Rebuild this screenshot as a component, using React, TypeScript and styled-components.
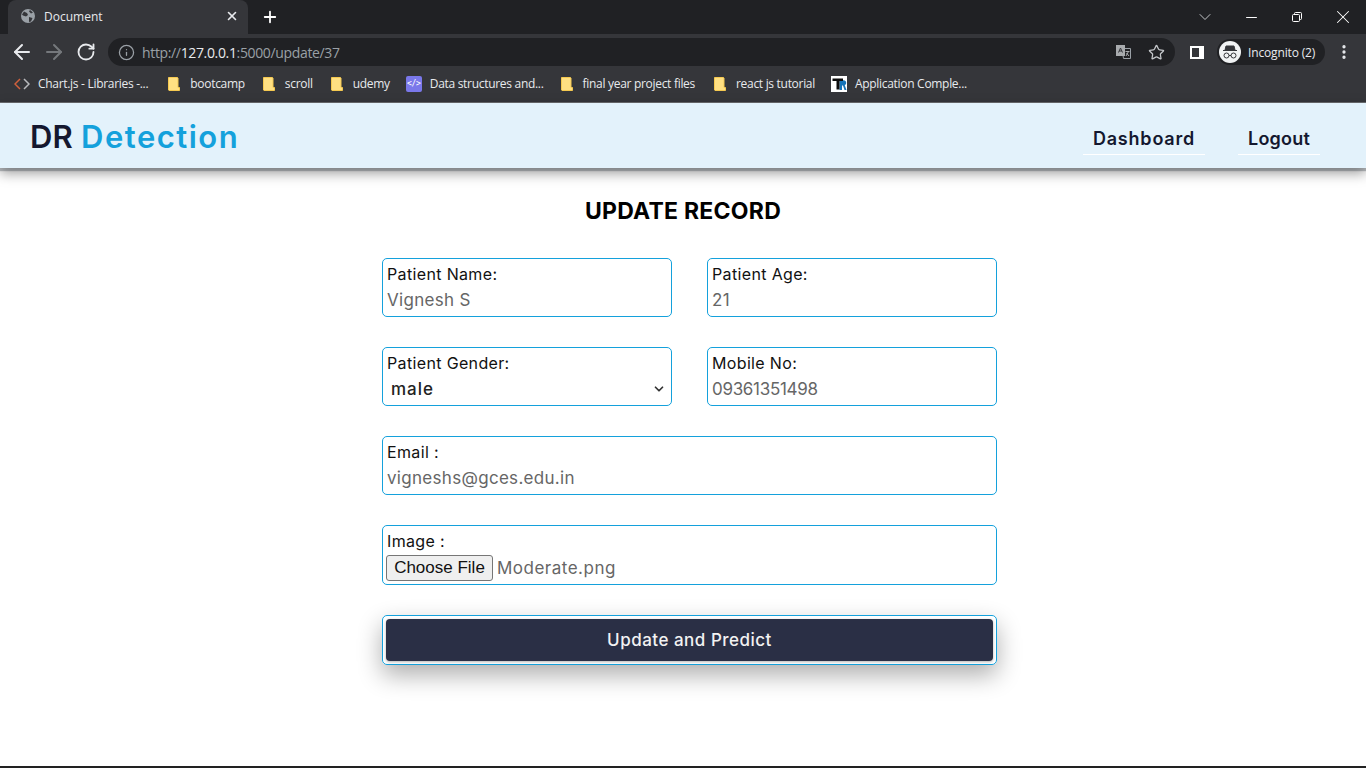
import React from 'react';
import styled, {createGlobalStyle} from "styled-components";
import {ArrowLeft, ArrowRight, ChevronDown, Info, Minus, MoreVertical, Plus, RotateCw, Star, X} from "lucide-react";

const GlobalStyle = createGlobalStyle`
  * {
    box-sizing: border-box;
  }
  html, body {
    margin: 0;
    padding: 0;
    background: #fff;
    overflow: hidden;
  }
`

const Folder = () => (
    <FolderSvg width="12" height="14" viewBox="0 0 12 14">
        <path d="M.5.5h9l.5.5v9.500h1.500v3H1l-.5-.5z" fill="#ffe082" stroke="#f5c950"/>
    </FolderSvg>
);

const bookmarks = [
    {title: 'bootcamp', icon: 'folder', gap: 18},
    {title: 'scroll', icon: 'folder', gap: 18},
    {title: 'udemy', icon: 'folder', gap: 16},
    {title: 'Data structures and...', icon: 'code', gap: 17},
    {title: 'final year project files', icon: 'folder', gap: 19},
    {title: 'react js tutorial', icon: 'folder', gap: 16},
    {title: 'Application Comple...', icon: 'r', gap: 0},
];

const BookmarkIcon = ({icon}: { icon: string }) => {
    if (icon === 'code') return <CodeBadge>&lt;/&gt;</CodeBadge>;
    if (icon === 'r') {
        return (
            <LogoBadge>
                <svg width="16" height="16" viewBox="0 0 16 16" fill="none">
                    <path d="M8.500 6.500V14h2.500V9.500h1l1.500 4.500H15.500l-1.800-5c1-.4 1.500-1.200 1.500-2.300 0-1.500-1-2.400-2.700-2.400H8.500z" fill="#1573b8"/>
                    <path d="M1.500 2.500h10.500v2.500H8.500v8.500H5.500V5H1.500z" fill="#0c0c0c"/>
                </svg>
            </LogoBadge>
        );
    }
    return <Folder/>;
};

export default function App() {
    return (
        <Screen>
            <GlobalStyle/>
            <TabStrip>
                <Tab>
                    <svg width="14" height="14" viewBox="0 0 14 14">
                        <circle cx="7" cy="7" r="7" fill="#9aa0a6"/>
                        <path d="M3 2.500l3 1.500 1 2-2 1.500-3-1-1-1zM8 8l3.500 1-1.500 3.500-2 .5zM9 1l3 2.500-2 1-2-2z" fill="#35363a"/>
                    </svg>
                    <TabTitle>Document</TabTitle>
                    <X size={14} strokeWidth={2.8} color="#e8eaed"/>
                </Tab>
                <NewTab><Plus size={18} strokeWidth={2.4}/></NewTab>
                <WindowControls>
                    <ChevronDown size={20} strokeWidth={1.1} color="#d0d2d5"/>
                    <WindowButton><Minus size={17} strokeWidth={1.4}/></WindowButton>
                    <WindowButton>
                        <svg width="12" height="12" viewBox="0 0 12 12" fill="none" stroke="#fff">
                            <rect x="1.500" y="3.500" width="7" height="7" rx="1"/>
                            <path d="M3.500 3.500V2.500a1 1 0 0 1 1-1h5a1 1 0 0 1 1 1v5a1 1 0 0 1-1 1h-1"/>
                        </svg>
                    </WindowButton>
                    <WindowButton><X size={22} strokeWidth={1.1}/></WindowButton>
                </WindowControls>
            </TabStrip>
            <Toolbar>
                <NavIcons>
                    <ArrowLeft size={24} strokeWidth={2} color="#e8eaed"/>
                    <ArrowRight size={24} strokeWidth={2} color="#75787c"/>
                    <ReloadIcon><RotateCw size={20} strokeWidth={2.2} color="#e8eaed"/></ReloadIcon>
                </NavIcons>
                <Omnibox>
                    <Info size={17} strokeWidth={1.8} color="#9aa0a6"/>
                    <Url>http://<UrlHost>127.0.0.1</UrlHost>:5000/update/37</Url>
                    <TranslateIcon>
                        <svg width="15" height="14" viewBox="0 0 15 14">
                            <path d="M6 3.500h8.500v10H7.500z" fill="#202124" stroke="#9aa0a6"/>
                            <rect x="0" y="0" width="9" height="11" fill="#a8abae"/>
                            <path d="M2.500 7.500l2-4.500 2 4.500M3.200 6h2.600" stroke="#35363a" fill="none"/>
                            <path d="M9.500 6.500h4M12.500 6.500l-2.500 4.500M10.500 8l2.500 3" stroke="#a8abae" fill="none"/>
                        </svg>
                    </TranslateIcon>
                    <Star size={17} strokeWidth={1.8} color="#c4c7ca"/>
                </Omnibox>
                <SidePanelIcon/>
                <ProfileChip>
                    <ProfileAvatar>
                        <svg width="16" height="14" viewBox="0 0 16 14" fill="none" stroke="#35363a">
                            <path d="M4 1h8l1 4H3zM1 5.500h14" fill="#35363a"/>
                            <circle cx="4.500" cy="10.500" r="2.500"/>
                            <circle cx="11.500" cy="10.500" r="2.500"/>
                            <path d="M7 10.500h2"/>
                        </svg>
                    </ProfileAvatar>
                    <ProfileName>Incognito (2)</ProfileName>
                </ProfileChip>
                <MoreVertical size={18} strokeWidth={2.4} color="#e8eaed"/>
            </Toolbar>
            <BookmarksBar>
                <Bookmark $gap={20}>
                    <ChartIcon viewBox="0 0 16 12" width="16" height="12" fill="none" strokeWidth="1.500">
                        <path d="M6 1L1 6l5 5" stroke="#d0603c"/>
                        <path d="M10 1l5 5-5 5" stroke="#b8babd"/>
                    </ChartIcon>
                    Chart.js - Libraries -...
                </Bookmark>
                {bookmarks.map((b) => (
                    <Bookmark key={b.title} $gap={b.gap}>
                        <BookmarkIcon icon={b.icon}/>
                        {b.title}
                    </Bookmark>
                ))}
            </BookmarksBar>
            <Navbar>
                <Logo>DR <LogoAccent>Detection</LogoAccent></Logo>
                <NavLinks>
                    <NavLink href="#" $spacing={0.8}>Dashboard</NavLink>
                    <NavLink href="#" $spacing={0.2}>Logout</NavLink>
                </NavLinks>
            </Navbar>
            <Main>
                <Title>UPDATE RECORD</Title>
                <Form>
                    <Field>
                        <Label>Patient Name:</Label>
                        <Value>Vignesh S</Value>
                    </Field>
                    <Field>
                        <Label>Patient Age:</Label>
                        <Value>21</Value>
                    </Field>
                    <Field>
                        <Label>Patient Gender:</Label>
                        <SelectRow>
                            male
                            <ChevronDown size={14} strokeWidth={3} color="#333"/>
                        </SelectRow>
                    </Field>
                    <Field>
                        <Label>Mobile No:</Label>
                        <Value $spacing={-0.3}>09361351498</Value>
                    </Field>
                    <Field $wide>
                        <Label>Email :</Label>
                        <Value>vigneshs@gces.edu.in</Value>
                    </Field>
                    <Field $wide $tall>
                        <Label>Image :</Label>
                        <FileRow>
                            <FileButton type="button">Choose File</FileButton>
                            <Value $spacing={0.5}>Moderate.png</Value>
                        </FileRow>
                    </Field>
                    <SubmitFrame>
                        <SubmitButton type="button">Update and Predict</SubmitButton>
                    </SubmitFrame>
                </Form>
            </Main>
            <TaskbarEdge/>
        </Screen>
    );
}

const chromeFont = `"Open Sans", "Noto Sans", sans-serif`;
const pageFont = `"Inter", "Open Sans", sans-serif`;

const Screen = styled.div`
  width: 1366px;
  height: 768px;
  display: flex;
  flex-direction: column;
  overflow: hidden;
  background: #fff;
`

const TabStrip = styled.div`
  height: 34px;
  flex-shrink: 0;
  display: flex;
  align-items: flex-end;
  padding-left: 8px;
  background: #202124;
`

const Tab = styled.div`
  width: 240px;
  height: 34px;
  display: flex;
  align-items: center;
  padding: 0 9px 2px 13px;
  background: #35363a;
  border-radius: 8px 8px 0 0;
`

const TabTitle = styled.span`
  flex: 1;
  margin-left: 9px;
  color: #e8eaed;
  font: 12px ${chromeFont};
`

const NewTab = styled.div`
  width: 18px;
  height: 34px;
  margin-left: 13px;
  display: flex;
  align-items: center;
  color: #fff;
`

const WindowControls = styled.div`
  margin-left: auto;
  height: 34px;
  display: flex;
  align-items: center;
  color: #fff;
`

const WindowButton = styled.div`
  width: 46px;
  height: 30px;
  display: flex;
  align-items: center;
  justify-content: center;
  &:first-of-type {
    margin-left: 13px;
  }
`

const Toolbar = styled.div`
  height: 34px;
  flex-shrink: 0;
  display: flex;
  align-items: center;
  padding: 2px 12px 0 10px;
  background: #35363a;
`

const NavIcons = styled.div`
  display: flex;
  align-items: center;
  gap: 8px;
  width: 98px;
`

const ReloadIcon = styled.span`
  display: flex;
  margin-left: 2px;
`

const Omnibox = styled.div`
  width: 1067px;
  height: 28px;
  display: flex;
  align-items: center;
  padding: 0 10px 0 10px;
  background: #202124;
  border-radius: 14px;
`

const Url = styled.span`
  flex: 1;
  margin-left: 7px;
  color: #9aa0a6;
  font: 14px ${chromeFont};
  letter-spacing: -0.35px;
`

const UrlHost = styled.span`
  color: #e8eaed;
`

const TranslateIcon = styled.span`
  display: flex;
  margin-right: 17px;
`

const SidePanelIcon = styled.div`
  width: 14px;
  height: 13px;
  margin-left: 15px;
  border: 2px solid #fff;
  border-right-width: 5px;
  background: #35363a;
`

const ProfileChip = styled.div`
  width: 108px;
  height: 26px;
  margin-left: 13px;
  margin-right: 10px;
  display: flex;
  align-items: center;
  padding-left: 2px;
  background: #202124;
  border-radius: 13px;
`

const ProfileAvatar = styled.div`
  width: 22px;
  height: 22px;
  display: flex;
  align-items: center;
  justify-content: center;
  background: #f1f3f4;
  border-radius: 50%;
`

const ProfileName = styled.span`
  margin-left: 7px;
  color: #e8eaed;
  font: 12px ${chromeFont};
  letter-spacing: -0.15px;
  white-space: nowrap;
`

const BookmarksBar = styled.div`
  height: 35px;
  flex-shrink: 0;
  display: flex;
  align-items: center;
  padding: 0 0 3px 14px;
  background: #35363a;
  border-bottom: 1px solid #6b6d70;
`

const Bookmark = styled.div<{ $gap: number }>`
  display: flex;
  align-items: center;
  gap: 8px;
  margin-right: ${props => props.$gap}px;
  color: #e8eaed;
  font: 12px ${chromeFont};
  letter-spacing: -0.3px;
  white-space: nowrap;
`

const ChartIcon = styled.svg`
  flex-shrink: 0;
`

const FolderSvg = styled.svg`
  margin-right: 2px;
`

const CodeBadge = styled.span`
  width: 16px;
  height: 16px;
  display: flex;
  align-items: center;
  justify-content: center;
  background: #7a78ea;
  border-radius: 2px;
  color: #fff;
  font: 8px "DejaVu Sans Mono", monospace;
`

const LogoBadge = styled.span`
  width: 16px;
  height: 16px;
  display: flex;
  background: #fff;
`

const Navbar = styled.header`
  height: 65px;
  flex-shrink: 0;
  position: relative;
  display: flex;
  align-items: center;
  justify-content: space-between;
  padding: 0 46px 0 30px;
  background: #e3f2fb;
  box-shadow: 0 3px 1px rgba(40, 50, 60, 0.3), 0 5px 12px rgba(0, 0, 0, 0.4);
`

const Logo = styled.div`
  margin-top: 1px;
  color: #14182f;
  font: 600 31px ${pageFont};
  letter-spacing: 0.2px;
`

const LogoAccent = styled.span`
  color: #14a1dc;
  letter-spacing: 1.5px;
`

const NavLinks = styled.nav`
  display: flex;
  gap: 33px;
  margin-top: 6px;
`

const NavLink = styled.a<{ $spacing: number }>`
  padding: 6px 10px 5px;
  border-bottom: 1px solid #fff;
  color: #14182f;
  font: 600 18px ${pageFont};
  letter-spacing: ${props => props.$spacing}px;
  text-decoration: none;
`

const Main = styled.main`
  flex: 1;
  display: flex;
  flex-direction: column;
  align-items: center;
  padding-top: 28px;
`

const Title = styled.h1`
  margin: 0 0 32px;
  color: #000;
  font: 700 23px/30px ${pageFont};
  letter-spacing: 0.25px;
`

const Form = styled.form`
  width: 615px;
  margin-left: 13px;
  display: grid;
  grid-template-columns: 290px 290px;
  column-gap: 35px;
  row-gap: 30px;
`

const Field = styled.div<{ $wide?: boolean, $tall?: boolean }>`
  grid-column: ${props => props.$wide ? '1 / -1' : 'auto'};
  height: ${props => props.$tall ? '60px' : '59px'};
  padding: 3px 4px;
  border: 1px solid #14a1dc;
  border-radius: 5px;
`

const Label = styled.div`
  color: #111;
  font: 400 16px/25px ${pageFont};
  letter-spacing: 0.35px;
`

const Value = styled.div<{ $spacing?: number }>`
  color: #666;
  font: 400 17px/26px ${pageFont};
  letter-spacing: ${props => props.$spacing ?? 0.3}px;
`

const SelectRow = styled.div`
  display: flex;
  align-items: center;
  justify-content: space-between;
  padding: 0 1px 0 4px;
  color: #222;
  font: 500 17px/26px ${pageFont};
  letter-spacing: 1px;
`

const FileRow = styled.div`
  display: flex;
  align-items: center;
  gap: 4px;
  margin: 1px 0 0 -1px;
`

const FileButton = styled.button`
  width: 107px;
  height: 26px;
  padding: 0;
  background: #efefef;
  border: 1px solid #767676;
  border-radius: 3px;
  color: #111;
  font: 17px "Liberation Sans", sans-serif;
`

const SubmitFrame = styled.div`
  grid-column: 1 / -1;
  height: 50px;
  padding: 3px;
  border: 1px solid #14a1dc;
  border-radius: 5px;
  box-shadow: 0 10px 25px rgba(0, 0, 0, 0.32);
`

const SubmitButton = styled.button`
  width: 100%;
  height: 42px;
  background: #2a2f45;
  border: 0;
  border-radius: 4px;
  box-shadow: 0 1px 3px rgba(0, 0, 0, 0.3);
  color: #f2f2f2;
  font: 500 17px ${pageFont};
  letter-spacing: 0.5px;
`

const TaskbarEdge = styled.div`
  height: 2px;
  flex-shrink: 0;
  background: #222;
`
